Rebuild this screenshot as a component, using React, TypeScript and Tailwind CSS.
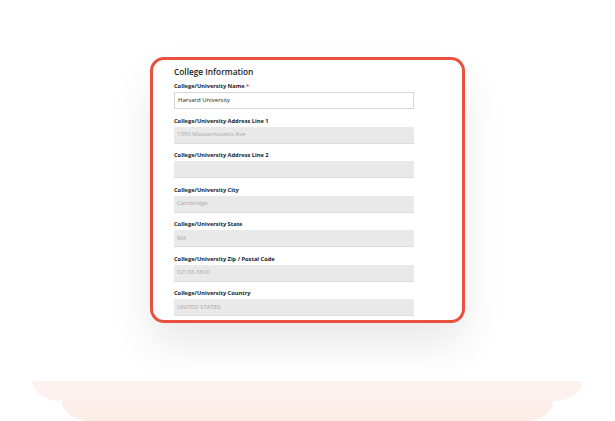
const fields = [
  { label: 'College/University Address Line 1', value: '1350 Massachusetts Ave' },
  { label: 'College/University Address Line 2', value: '' },
  { label: 'College/University City', value: 'Cambridge' },
  { label: 'College/University State', value: 'MA' },
  { label: 'College/University Zip / Postal Code', value: '02138-3800' },
  { label: 'College/University Country', value: 'UNITED STATES' },
];

function Field({ label, value, required, active }: { label: string; value: string; required?: boolean; active?: boolean }) {
  return (
    <div className="flex flex-col">
      <div className="text-[5.7px] leading-[8px] font-bold text-[#222]">
        {label}
        {required && <span className="text-[#e74c3c]"> *</span>}
      </div>
      <div
        className={`mt-[2px] h-[17px] flex items-center px-[3px] text-[6px] ${
          active ? 'bg-white border border-[#d6d6d6] text-[#222]' : 'bg-[#e9e9e9] border-b border-[#dcdcdc] text-[#a8a8a8]'
        }`}
      >
        {value}
      </div>
    </div>
  );
}

export default function App() {
  return (
    <div className="h-[421px] w-full overflow-hidden bg-white flex flex-col items-center pt-[57px]" style={{ fontFamily: '"Open Sans", sans-serif' }}>
      <div className="w-[315px] h-[266px] shrink-0 rounded-[14px] border-[3px] border-[#e8503f] bg-white overflow-hidden shadow-[0_22px_40px_rgba(0,0,0,0.09)] pl-[21px] pt-[6px]">
        <div className="text-[8.3px] leading-[12px] font-semibold text-[#222]">College Information</div>
        <div className="w-[240px] mt-[4px] flex flex-col gap-[7.5px]">
          <Field label="College/University Name" value="Harvard University" required active />
          {fields.map((f) => (
            <Field key={f.label} label={f.label} value={f.value} />
          ))}
        </div>
      </div>
      <div className="mt-[58px] w-[551px] h-[20px] shrink-0 bg-[#fdf2ef] rounded-b-[30px_20px]" />
      <div className="w-[491px] h-[20px] shrink-0 bg-[#fbede8] rounded-b-[28px_20px]" />
    </div>
  );
}
